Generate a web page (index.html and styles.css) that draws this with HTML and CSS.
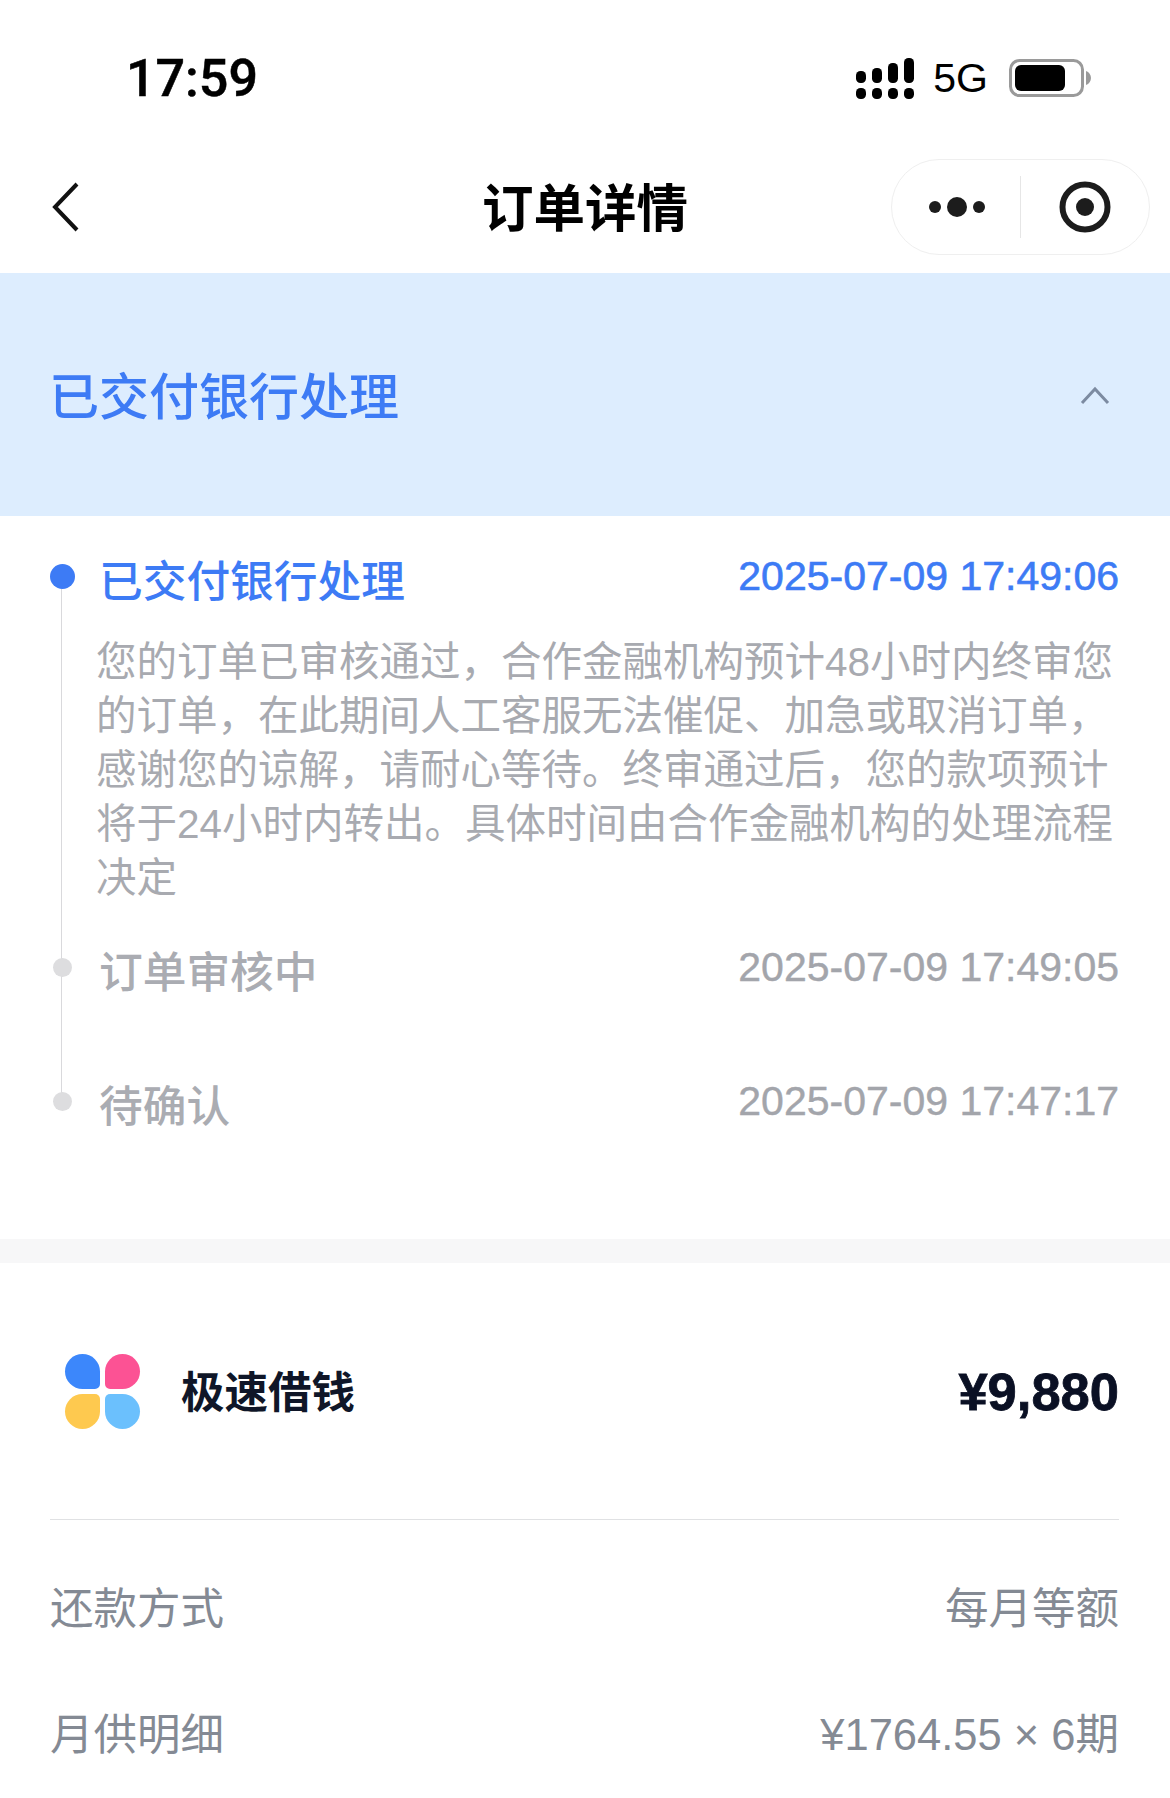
FILE: index.html
```html
<!DOCTYPE html>
<html lang="zh-CN">
<head>
  <meta charset="UTF-8" />
  <meta name="viewport" content="width=device-width, initial-scale=1.0" />
  <title>订单详情</title>
  <link rel="stylesheet" href="styles.css">
</head>
<body>
  <div class="status-bar">
    <span class="clock">17:59</span>
    <div class="status-icons">
      <svg class="signal" width="58" height="41" viewBox="0 0 58 41">
        <rect x="0" y="13" width="10" height="12" rx="4.5"/>
        <rect x="16" y="10" width="10" height="15" rx="4.5"/>
        <rect x="32" y="5" width="10" height="20" rx="4.5"/>
        <rect x="48" y="0" width="10" height="25" rx="4.5"/>
        <rect x="0" y="30" width="10" height="11" rx="4.5"/>
        <rect x="16" y="30" width="10" height="11" rx="4.5"/>
        <rect x="32" y="30" width="10" height="11" rx="4.5"/>
        <rect x="48" y="30" width="10" height="11" rx="4.5"/>
      </svg>
      <span class="network">5G</span>
      <svg class="battery" width="82" height="38" viewBox="0 0 82 38">
        <rect x="1.5" y="1.5" width="72" height="35" rx="9" fill="none" stroke="#9a9a9a" stroke-width="3"/>
        <rect x="6" y="6" width="50" height="26" rx="6" fill="#000"/>
        <path d="M77 12c3 1 5 4 5 7s-2 6-5 7z" fill="#9a9a9a"/>
      </svg>
    </div>
  </div>

  <div class="nav-bar">
    <div class="nav-left">
      <svg width="27" height="50" viewBox="0 0 27 50"><path d="M25 2 3 25l22 23" fill="none" stroke="#111" stroke-width="4"/></svg>
    </div>
    <h1 class="nav-title">订单详情</h1>
    <div class="nav-right">
      <div class="capsule">
        <svg class="capsule-more" width="56" height="20" viewBox="0 0 56 20" fill="#1c1c1c">
          <circle cx="6" cy="10" r="6"/><circle cx="28" cy="10" r="10"/><circle cx="50" cy="10" r="6"/>
        </svg>
        <span class="capsule-sep"></span>
        <svg class="capsule-close" width="52" height="52" viewBox="0 0 52 52">
          <circle cx="26" cy="26" r="22.5" fill="none" stroke="#1c1c1c" stroke-width="6"/>
          <circle cx="26" cy="26" r="9" fill="#1c1c1c"/>
        </svg>
      </div>
    </div>
  </div>

  <div class="status-banner">
    <span class="status-banner-text">已交付银行处理</span>
    <svg class="status-banner-arrow" width="30" height="19" viewBox="0 0 30 19"><path d="M2 17 15 3l13 14" fill="none" stroke="#7c8ba1" stroke-width="3"/></svg>
  </div>

  <div class="timeline">
    <div class="tl-item active">
      <div class="tl-head">
        <span class="tl-dot-wrap"><span class="tl-dot"></span></span>
        <span class="tl-title">已交付银行处理</span>
        <span class="tl-time">2025-07-09 17:49:06</span>
      </div>
      <p class="tl-desc">您的订单已审核通过，合作金融机构预计48小时内终审您的订单，在此期间人工客服无法催促、加急或取消订单，感谢您的谅解，请耐心等待。终审通过后，您的款项预计将于24小时内转出。具体时间由合作金融机构的处理流程决定</p>
    </div>
    <div class="tl-item">
      <div class="tl-head">
        <span class="tl-dot-wrap"><span class="tl-dot"></span></span>
        <span class="tl-title">订单审核中</span>
        <span class="tl-time">2025-07-09 17:49:05</span>
      </div>
    </div>
    <div class="tl-item">
      <div class="tl-head">
        <span class="tl-dot-wrap"><span class="tl-dot"></span></span>
        <span class="tl-title">待确认</span>
        <span class="tl-time">2025-07-09 17:47:17</span>
      </div>
    </div>
  </div>

  <div class="gap-bar"></div>

  <div class="order-card">
    <div class="product-row">
      <div class="logo">
        <span class="petal petal-blue"></span>
        <span class="petal petal-pink"></span>
        <span class="petal petal-yellow"></span>
        <span class="petal petal-sky"></span>
      </div>
      <span class="product-name">极速借钱</span>
      <span class="product-amount">¥9,880</span>
    </div>
    <div class="info-list">
      <div class="info-row"><span>还款方式</span><span>每月等额</span></div>
      <div class="info-row"><span>月供明细</span><span>¥1764.55 × 6期</span></div>
    </div>
  </div>
</body>
</html>
```

FILE: styles.css
```css
html, body {
  margin: 0;
  padding: 0;
  height: 1798px;
  overflow: hidden;
  background: #ffffff;
  font-family: "Liberation Sans", "Noto Sans CJK SC", sans-serif;
}

.status-bar {
  height: 140px;
  display: flex;
  justify-content: space-between;
  align-items: center;
  padding: 16px 79px 0 126px;
  box-sizing: border-box;
}

.clock {
  font-family: Roboto, sans-serif;
  font-size: 52px;
  font-weight: 500;
  color: #000;
  -webkit-text-stroke: 0.5px #000;
}

.status-icons {
  display: flex;
  align-items: center;
}

.signal { margin-right: 19px; }
.network { font-size: 41px; color: #000; margin-right: 21px; }

.nav-bar {
  height: 133px;
  display: grid;
  grid-template-columns: 1fr auto 1fr;
  align-items: center;
}

.nav-left {
  padding-left: 52px;
  display: flex;
  align-items: center;
}

.nav-title {
  margin: 0 0 4px;
  font-size: 51.5px;
  font-weight: 700;
  color: #000;
}

.nav-right {
  display: flex;
  justify-content: flex-end;
  padding-right: 20px;
}

.capsule {
  width: 259px;
  height: 96px;
  box-sizing: border-box;
  border: 1px solid #efefef;
  border-radius: 48px;
  display: flex;
  align-items: center;
  padding-left: 37px;
}

.capsule-sep {
  width: 1px;
  height: 62px;
  background: #e6e6e6;
  margin: 0 38px 0 35px;
}

.status-banner {
  height: 243px;
  background: #ddedfe;
  display: flex;
  justify-content: space-between;
  align-items: center;
  padding: 0 60px 0 49px;
}

.status-banner-text {
  font-size: 50px;
  font-weight: 500;
  color: #3d7bf5;
  margin-bottom: 4px;
}

.status-banner-arrow { margin-top: 2px; }

.timeline {
  position: relative;
  height: 723px;
  box-sizing: border-box;
  padding: 29px 51px 0 50px;
}

.timeline::before {
  content: "";
  position: absolute;
  left: 60.5px;
  top: 59px;
  height: 525px;
  width: 1.5px;
  background: #d9d9dc;
}

.tl-item { margin-bottom: 31px; }
.tl-item + .tl-item { margin-bottom: 72px; }

.tl-head {
  display: flex;
  align-items: flex-start;
  height: 62px;
  position: relative;
}

.tl-dot-wrap {
  width: 25px;
  height: 62px;
  margin-right: 24px;
  display: flex;
  align-items: center;
  justify-content: center;
}

.tl-dot {
  width: 19px;
  height: 19px;
  border-radius: 50%;
  background: #dddddf;
}

.tl-title {
  flex: 1;
  font-size: 43.7px;
  line-height: 54px;
  padding-top: 10px;
  color: #aaacb2;
  font-weight: 500;
}

.tl-time {
  font-size: 41px;
  line-height: 62px;
  color: #a3a5ab;
  -webkit-text-stroke: 0.4px #a3a5ab;
}

.tl-desc {
  margin: 28px 0 0 46px;
  font-size: 40.5px;
  line-height: 54px;
  color: #a8aab0;
}

.tl-item.active .tl-dot {
  width: 25px;
  height: 25px;
  background: #3d7bf5;
}

.tl-item.active .tl-title { color: #3d7bf5; }
.tl-item.active .tl-time { color: #3d7bf5; -webkit-text-stroke: 0.6px #3d7bf5; }

.gap-bar {
  height: 24px;
  background: #f7f7f8;
}

.order-card {
  padding: 0 51px 0 50px;
}

.product-row {
  height: 256px;
  display: flex;
  align-items: center;
  border-bottom: 1px solid #e0e1e3;
  padding-left: 15px;
}

.logo {
  width: 75px;
  display: grid;
  grid-template-columns: 35px 35px;
  gap: 5px;
  margin-right: 41px;
}

.petal { height: 35px; }
.petal-blue { background: #3c87fb; border-radius: 50% 50% 5px 50%; }
.petal-pink { background: #fc5294; border-radius: 50% 50% 50% 5px; }
.petal-yellow { background: #fec94f; border-radius: 50% 5px 50% 50%; }
.petal-sky { background: #6bc0fd; border-radius: 5px 50% 50% 50%; }

.product-name {
  flex: 1;
  font-size: 43.5px;
  font-weight: 700;
  color: #0f1628;
  margin-bottom: 4px;
}

.product-amount {
  font-size: 52.5px;
  font-weight: 700;
  color: #0a1024;
  -webkit-text-stroke: 0.8px #0a1024;
}

.info-list { padding-top: 22px; }

.info-row {
  height: 126px;
  display: flex;
  justify-content: space-between;
  align-items: center;
  font-size: 43.5px;
  color: #848a94;
}
```
